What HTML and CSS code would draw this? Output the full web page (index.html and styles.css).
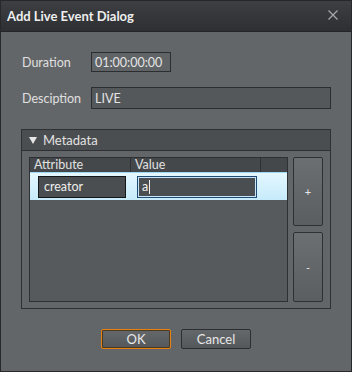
FILE: index.html
```html
<!DOCTYPE html>
<html>
<head>
<meta charset="utf-8">
<link rel="stylesheet" href="styles.css">
</head>
<body>
<div class="window">
  <div class="titlebar">
    <span class="title">Add Live Event Dialog</span>
    <svg class="close" width="10" height="10" viewBox="0 0 10 10"><path d="M0.5 0.5 L9.5 9.5 M9.5 0.5 L0.5 9.5" stroke="#a4a6a8" stroke-width="1.3" fill="none"/></svg>
  </div>
  <div class="content">
    <div class="row row-duration">
      <span class="label">Duration</span>
      <div class="input input-duration">01:00:00:00</div>
    </div>
    <div class="row row-desc">
      <span class="label">Desciption</span>
      <div class="input input-desc">LIVE</div>
    </div>
    <div class="group">
      <div class="group-head"><svg class="tri" width="8" height="7" viewBox="0 0 8 7"><polygon points="0,0 8,0 4,7" fill="#e6e6e6"/></svg>Metadata</div>
      <div class="group-body">
        <div class="table">
          <div class="thead">
            <div class="th th-attr">Attribute</div>
            <div class="th th-val">Value</div>
            <div class="th th-rest"></div>
          </div>
          <div class="trow">
            <div class="cell cell-attr"><div class="edit edit-attr">creator</div></div>
            <div class="cell cell-val"><div class="edit edit-val">a<span class="caret"></span></div></div>
          </div>
        </div>
        <div class="side">
          <button class="sbtn plus">+</button>
          <button class="sbtn minus">-</button>
        </div>
      </div>
    </div>
    <div class="footer">
      <button class="btn ok">OK</button>
      <button class="btn">Cancel</button>
    </div>
  </div>
</div>
</body>
</html>
```
FILE: styles.css
```css
* { box-sizing: border-box; }
html, body { margin: 0; padding: 0; background: #2b2d2f; }
body { font-family: Lato, "Noto Sans", sans-serif; font-size: 12.5px; color: #dcdcdc; }
.window {
  width: 352px; height: 372px;
  border: 1px solid #26282a;
  background: #636668;
  display: flex; flex-direction: column;
}
.titlebar {
  height: 31px;
  background: linear-gradient(#3d3f42, #2d2f32);
  border-bottom: 1px solid #222426;
  display: flex; align-items: center; justify-content: space-between;
  padding: 0 13px 0 6px;
}
.title { font-weight: bold; font-size: 13px; color: #eeeeee; }
.close { display: block; margin-top: -2px; }
.content { padding: 20px 20px 0 20px; display: flex; flex-direction: column; }
.row { display: flex; align-items: center; }
.label { width: 70px; padding-left: 1px; color: #e0e0e0; }
.input {
  border: 1px solid #2b2d30;
  padding: 0 0 0 3px;
  color: #e4e4e4;
  display: flex; align-items: center;
}
.input-duration { width: 80px; height: 20px; background: #616467; }
.input-desc { width: 240px; height: 22px; background: #55585b; }
.row-desc { margin-top: 15px; }
.group { margin-top: 20px; width: 310px; border: 1px solid #2e3033; }
.group-head {
  height: 21px;
  background: #4b4e51;
  border-bottom: 1px solid #2e3033;
  display: flex; align-items: center;
  padding-left: 7px; color: #e2e2e2; font-size: 13px;
}
.tri { display: block; margin-right: 6px; }
.group-body { display: flex; padding: 6px 7px 6px 7px; gap: 5px; }
.table {
  width: 259px; height: 145px;
  background: #575a5c;
  border: 1px solid #2e3033;
}
.thead { display: flex; height: 14px; background: #45484b; }
.th { color: #e2e2e2; line-height: 14px; padding-left: 4px; border-right: 1px solid #2e3033; }
.th-attr { width: 101px; }
.th-val { width: 130px; }
.th-rest { border-right: none; }
.trow {
  height: 28px;
  background: linear-gradient(#e4f7ff, #c6ebfb);
  border-top: 1px solid #9fd8f3;
  display: flex; align-items: center;
}
.cell-attr { width: 107px; padding-left: 8px; }
.edit {
  height: 22px; display: flex; align-items: center; padding-left: 5px;
  color: #eeeeee; background: #4b4e50;
}
.edit-attr { width: 88px; border: 1px solid #141618; }
.edit-val { width: 120px; border: 1px solid #1f4a73; box-shadow: inset 0 0 0 1px #c8e6f8; background: #4b4e50; padding-left: 4px; }
.caret { display: inline-block; width: 1px; height: 14px; background: #f0f0f0; margin-left: 1px; }
.side { display: flex; flex-direction: column; gap: 6px; }
.sbtn {
  width: 30px; border: 1px solid #2e3033; border-radius: 2px;
  background: linear-gradient(#6c6f71, #5b5e61);
  color: #e8e8e8; font-family: inherit; font-size: 11px; padding: 0;
}
.plus { height: 69px; }
.minus { height: 70px; }
.footer { display: flex; justify-content: center; gap: 10px; margin-top: 20px; margin-left: -20px; margin-right: -20px; }
.btn {
  width: 70px; height: 20px;
  border: 1px solid #2b2d30; border-radius: 2px;
  background: linear-gradient(#65686a, #55585b);
  color: #e8e8e8; font-family: inherit; font-size: 13px; padding: 0;
}
.btn.ok { border: 1px solid #e8820e; box-shadow: inset 0 0 0 1px #4a3a22; }
```
